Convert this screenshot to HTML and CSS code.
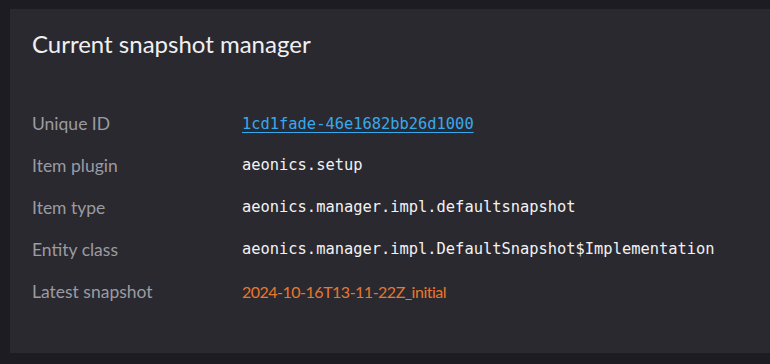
FILE: index.html
```html
<!DOCTYPE html>
<html lang="en">
<head>
    <meta charset="UTF-8">
    <title>Current snapshot manager</title>
    <link rel="stylesheet" href="styles.css">
</head>
<body>
    <div class="panel">
        <h1>Current snapshot manager</h1>
        <div class="props">
            <div class="label">Unique ID</div>
            <div class="value"><a href="#" class="link">1cd1fade-46e1682bb26d1000</a></div>

            <div class="label">Item plugin</div>
            <div class="value code">aeonics.setup</div>

            <div class="label">Item type</div>
            <div class="value code">aeonics.manager.impl.defaultsnapshot</div>

            <div class="label">Entity class</div>
            <div class="value code">aeonics.manager.impl.DefaultSnapshot$Implementation</div>

            <div class="label">Latest snapshot</div>
            <div class="value snapshot">2024-10-16T13-11-22Z_initial</div>
        </div>
    </div>
</body>
</html>
```

FILE: styles.css
```css
body {
    margin: 0;
    padding: 9px 0 11px 10px;
    background: #1d1c22;
    font-family: Lato, "Noto Sans", sans-serif;
}

.panel {
    background: #2a2930;
    padding: 20px 22px 41px 22px;
}

h1 {
    margin: 0;
    font-size: 24px;
    line-height: 30px;
    font-weight: 400;
    color: #f0f0f2;
}

.props {
    margin-top: 43px;
    display: grid;
    grid-template-columns: 210px 1fr;
    grid-auto-rows: 42px;
    align-items: center;
}

.label {
    color: #9b9ba1;
    font-size: 17.5px;
}

.value {
    font-size: 16px;
    color: #f2f2f4;
}

.code,
.link {
    font-family: "DejaVu Sans Mono", "Liberation Mono", monospace;
    font-size: 15.4px;
}

.link {
    color: #36a9ee;
    text-decoration: underline;
    text-underline-offset: 3px;
}

.snapshot {
    color: #e8782e;
    letter-spacing: -0.5px;
}
```
